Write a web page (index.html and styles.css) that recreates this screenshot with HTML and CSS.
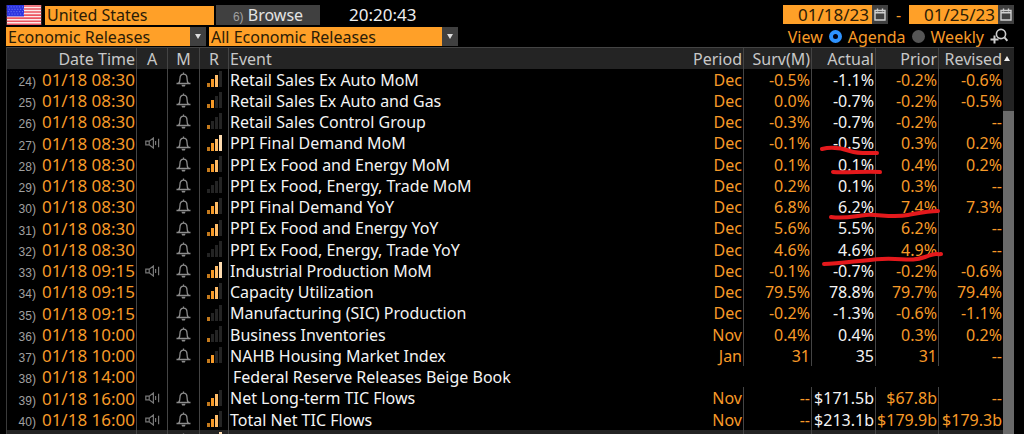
FILE: index.html
```
<!DOCTYPE html>
<html lang="en">
<head>
  <meta charset="UTF-8" />
  <meta name="viewport" content="width=device-width, initial-scale=1" />
  <title>Economic Releases</title>
  <link rel="stylesheet" href="styles.css">
</head>
<body>

  <!-- Shared icons -->
  <svg class="sprite" aria-hidden="true">
    <symbol id="bell" viewBox="0 0 15 15">
      <path d="M.5 11.5h14M2.6 11.2C3.8 10 4 9 4 6.2 4 3.8 5.4 2.2 7.5 2.2S11 3.8 11 6.2c0 2.8.2 3.8 1.4 5M7.5 2V.4" fill="none" stroke="#8c8c8c" stroke-width="1.3" />
      <path d="M5.4 12.8h4.2L8.8 14.6H6.2z" fill="#8c8c8c" />
    </symbol>
    <symbol id="sound" viewBox="0 0 15 12">
      <path d="M.8 4.2h3.4L8.4 1v10L4.2 7.8H.8zM4.2 4.2v3.6M10.6 4v4M13.6 1.8v8.4" fill="none" stroke="#777" stroke-width="1.2" />
    </symbol>
    <symbol id="bars" viewBox="0 0 15 17">
      <rect x="0" y="12" width="3" height="4" style="fill: var(--b1)" />
      <rect x="4" y="8" width="3" height="8" style="fill: var(--b2)" />
      <rect x="8" y="4" width="3" height="12" style="fill: var(--b3)" />
      <rect x="12" y="0" width="3" height="16" style="fill: var(--b4)" />
    </symbol>
    <symbol id="calendar" viewBox="0 0 12 13">
      <path d="M1 2.5h10v9.5H1z" fill="none" stroke="#d0d0d0" stroke-width="1.4" />
      <path d="M1 4.8h10M3.5.5v3M8.5.5v3" stroke="#d0d0d0" stroke-width="1.4" />
    </symbol>
  </svg>

  <main class="screen">
    <header class="toolbar">
      <div class="line">
        <svg class="flag" viewBox="0 0 36 21" role="img" aria-label="United States flag">
          <rect width="36" height="21" fill="#fbe9e9" />
          <path d="M0 1h36M0 4.2h36M0 7.4h36M0 10.6h36M0 13.8h36M0 17h36M0 20.2h36" stroke="#ec5560" stroke-width="1.7" />
          <rect width="18" height="12" fill="#2c35e0" />
          <path d="M1 2h17M2 4.5h16M1 7h17M2 9.5h16" stroke="#8189ff" stroke-width="1" stroke-dasharray="1 2" />
        </svg>
        <input class="country" type="text" value="United States" aria-label="Country">
        <button class="browse" type="button"><span class="key">6)</span> Browse</button>
        <time class="clock">20:20:43</time>
        <div class="dates">
          <input type="text" value="01/18/23" aria-label="From date">
          <button type="button" aria-label="Pick start date"><svg><use href="#calendar" /></svg></button>
          <span class="dash">-</span>
          <input type="text" value="01/25/23" aria-label="To date">
          <button type="button" aria-label="Pick end date"><svg><use href="#calendar" /></svg></button>
        </div>
      </div>

      <div class="line">
        <div class="drop category">
          <select aria-label="Category"><option>Economic Releases</option></select>
        </div>
        <div class="drop filter">
          <select aria-label="Filter"><option>All Economic Releases</option></select>
        </div>
        <div class="view">
          <span>View</span>
          <label><input type="radio" name="view" checked> Agenda</label>
          <label><input type="radio" name="view"> Weekly</label>
          <button type="button" aria-label="Add search">
            <svg viewBox="0 0 18 17">
              <circle cx="11" cy="6" r="4.6" fill="none" stroke="#ccc" stroke-width="1.6" />
              <path d="M14.4 9.4l3 3.4M.5 11.5h8M4.5 7.5v8" fill="none" stroke="#ccc" stroke-width="2" />
            </svg>
          </button>
        </div>
      </div>
    </header>

    <section class="grid">
      <table>
        <colgroup>
          <col class="c-date"><col class="c-a"><col class="c-m"><col class="c-r"><col>
          <col class="c-period"><col class="c-surv"><col class="c-actual"><col class="c-prior"><col class="c-revised">
        </colgroup>
        <thead>
          <tr><th>Date Time</th><th>A</th><th>M</th><th>R</th><th>Event</th><th>Period</th><th>Surv(M)</th><th>Actual</th><th>Prior</th><th>Revised</th></tr>
        </thead>
        <tbody>
          <tr><td><span class="key">24)</span>01/18 08:30</td><td></td><td><svg class="bell"><use href="#bell" /></svg></td><td><svg class="bars r3"><use href="#bars" /></svg></td><td>Retail Sales Ex Auto MoM</td><td>Dec</td><td>-0.5%</td><td>-1.1%</td><td>-0.2%</td><td>-0.6%</td></tr>
          <tr><td><span class="key">25)</span>01/18 08:30</td><td></td><td><svg class="bell"><use href="#bell" /></svg></td><td><svg class="bars r2"><use href="#bars" /></svg></td><td>Retail Sales Ex Auto and Gas</td><td>Dec</td><td>0.0%</td><td>-0.7%</td><td>-0.2%</td><td>-0.5%</td></tr>
          <tr><td><span class="key">26)</span>01/18 08:30</td><td></td><td><svg class="bell"><use href="#bell" /></svg></td><td><svg class="bars r1"><use href="#bars" /></svg></td><td>Retail Sales Control Group</td><td>Dec</td><td>-0.3%</td><td>-0.7%</td><td>-0.2%</td><td>--</td></tr>
          <tr><td><span class="key">27)</span>01/18 08:30</td><td><svg class="sound"><use href="#sound" /></svg></td><td><svg class="bell"><use href="#bell" /></svg></td><td><svg class="bars r4"><use href="#bars" /></svg></td><td>PPI Final Demand MoM</td><td>Dec</td><td>-0.1%</td><td>-0.5%</td><td>0.3%</td><td>0.2%</td></tr>
          <tr><td><span class="key">28)</span>01/18 08:30</td><td></td><td><svg class="bell"><use href="#bell" /></svg></td><td><svg class="bars r3"><use href="#bars" /></svg></td><td>PPI Ex Food and Energy MoM</td><td>Dec</td><td>0.1%</td><td>0.1%</td><td>0.4%</td><td>0.2%</td></tr>
          <tr><td><span class="key">29)</span>01/18 08:30</td><td></td><td><svg class="bell"><use href="#bell" /></svg></td><td><svg class="bars"><use href="#bars" /></svg></td><td>PPI Ex Food, Energy, Trade MoM</td><td>Dec</td><td>0.2%</td><td>0.1%</td><td>0.3%</td><td>--</td></tr>
          <tr><td><span class="key">30)</span>01/18 08:30</td><td></td><td><svg class="bell"><use href="#bell" /></svg></td><td><svg class="bars r3"><use href="#bars" /></svg></td><td>PPI Final Demand YoY</td><td>Dec</td><td>6.8%</td><td>6.2%</td><td>7.4%</td><td>7.3%</td></tr>
          <tr><td><span class="key">31)</span>01/18 08:30</td><td></td><td><svg class="bell"><use href="#bell" /></svg></td><td><svg class="bars r3"><use href="#bars" /></svg></td><td>PPI Ex Food and Energy YoY</td><td>Dec</td><td>5.6%</td><td>5.5%</td><td>6.2%</td><td>--</td></tr>
          <tr><td><span class="key">32)</span>01/18 08:30</td><td></td><td><svg class="bell"><use href="#bell" /></svg></td><td><svg class="bars"><use href="#bars" /></svg></td><td>PPI Ex Food, Energy, Trade YoY</td><td>Dec</td><td>4.6%</td><td>4.6%</td><td>4.9%</td><td>--</td></tr>
          <tr><td><span class="key">33)</span>01/18 09:15</td><td><svg class="sound"><use href="#sound" /></svg></td><td><svg class="bell"><use href="#bell" /></svg></td><td><svg class="bars r4"><use href="#bars" /></svg></td><td>Industrial Production MoM</td><td>Dec</td><td>-0.1%</td><td>-0.7%</td><td>-0.2%</td><td>-0.6%</td></tr>
          <tr><td><span class="key">34)</span>01/18 09:15</td><td></td><td><svg class="bell"><use href="#bell" /></svg></td><td><svg class="bars r3"><use href="#bars" /></svg></td><td>Capacity Utilization</td><td>Dec</td><td>79.5%</td><td>78.8%</td><td>79.7%</td><td>79.4%</td></tr>
          <tr><td><span class="key">35)</span>01/18 09:15</td><td></td><td><svg class="bell"><use href="#bell" /></svg></td><td><svg class="bars r1"><use href="#bars" /></svg></td><td>Manufacturing (SIC) Production</td><td>Dec</td><td>-0.2%</td><td>-1.3%</td><td>-0.6%</td><td>-1.1%</td></tr>
          <tr><td><span class="key">36)</span>01/18 10:00</td><td></td><td><svg class="bell"><use href="#bell" /></svg></td><td><svg class="bars r1"><use href="#bars" /></svg></td><td>Business Inventories</td><td>Nov</td><td>0.4%</td><td>0.4%</td><td>0.3%</td><td>0.2%</td></tr>
          <tr><td><span class="key">37)</span>01/18 10:00</td><td></td><td><svg class="bell"><use href="#bell" /></svg></td><td><svg class="bars r2"><use href="#bars" /></svg></td><td>NAHB Housing Market Index</td><td>Jan</td><td>31</td><td>35</td><td>31</td><td>--</td></tr>
          <tr><td><span class="key">38)</span>01/18 14:00</td><td></td><td></td><td></td><td class="note" colspan="6">Federal Reserve Releases Beige Book</td></tr>
          <tr><td><span class="key">39)</span>01/18 16:00</td><td><svg class="sound"><use href="#sound" /></svg></td><td><svg class="bell"><use href="#bell" /></svg></td><td><svg class="bars r3"><use href="#bars" /></svg></td><td>Net Long-term TIC Flows</td><td>Nov</td><td>--</td><td>$171.5b</td><td>$67.8b</td><td>--</td></tr>
          <tr><td><span class="key">40)</span>01/18 16:00</td><td><svg class="sound"><use href="#sound" /></svg></td><td><svg class="bell"><use href="#bell" /></svg></td><td><svg class="bars r3"><use href="#bars" /></svg></td><td>Total Net TIC Flows</td><td>Nov</td><td>--</td><td>$213.1b</td><td>$179.9b</td><td>$179.3b</td></tr>
          <tr class="next"><td></td><td></td><td><svg class="bell"><use href="#bell" /></svg></td><td><svg class="bars r4"><use href="#bars" /></svg></td><td></td><td></td><td></td><td></td><td></td><td></td></tr>
        </tbody>
      </table>

      <div class="scroll" aria-hidden="true">
        <div class="up"></div>
        <div class="thumb"></div>
      </div>

      <!-- Red pen marks under the PPI figures -->
      <svg class="marks" viewBox="0 0 130 130" aria-hidden="true">
        <path d="M6 14C14 12 25 13 34 16S52 18 61 18M17 37C30 38 50 36 64 37M15 82C30 84 38 81 50 80S76 83 92 80 112 76 122 76M8 129C25 129 45 125 66 124S95 127 109 122 118 120 125 119" />
      </svg>
    </section>
  </main>

</body>
</html>
```

FILE: styles.css
```
* {
  box-sizing: border-box;
}

body {
  margin: 0;
  height: 100vh;
  overflow: hidden;
  background: #000;
  color: #f79a28;
  font-family: "Noto Sans", "Open Sans", sans-serif;
  font-size: 16px;
  line-height: 20px;
}

input, select, button {
  font: inherit;
  border: 0;
  border-radius: 0;
  margin: 0;
  padding: 0;
  outline: 0;
}

.sprite {
  display: none;
}

.screen {
  display: flex;
  flex-direction: column;
  height: 100%;
  padding: 5px 10px 0 6px;
}

/* ---------- Toolbar ---------- */
.toolbar {
  display: flex;
  flex-direction: column;
  gap: 2px;
  padding-bottom: 1px;
}

.line {
  display: flex;
  align-items: center;
  height: 20px;
}
.line + .line {
  height: 19px;
}

.flag {
  width: 36px;
  height: 20px;
  margin-right: 3px;
}

.country, .dates input, .drop select {
  height: 19px;
  background: #ffa028;
  color: #2b1c06;
}

.country {
  width: 169px;
  padding-left: 2px;
}

.browse {
  width: 104px;
  height: 20px;
  margin-left: 2px;
  background: #404040;
  color: #e4e4e4;
}

.key {
  font-family: "Liberation Sans Narrow", "Liberation Sans", sans-serif;
  font-size: 12px;
  color: #a0a0a0;
}

.clock {
  margin-left: 29px;
  font-size: 17px;
  color: #eee;
}

.dates {
  display: flex;
  margin-left: auto;
}
.dates input {
  width: 89px;
  padding-right: 3px;
  text-align: right;
  font-size: 17px;
}
.dates button {
  width: 16px;
  height: 19px;
  background: #404040;
}
.dates svg {
  display: block;
  width: 12px;
  height: 13px;
  margin: 0 auto;
}
.dash {
  width: 21px;
  text-align: center;
}

.drop {
  position: relative;
  width: 200px;
  padding-right: 16px;
  background: #404040;
}
.drop select {
  display: block;
  width: 100%;
  padding-left: 2px;
  appearance: none;
}
.drop::after {
  content: "";
  position: absolute;
  top: 7px;
  right: 5px;
  border: 3px solid transparent;
  border-top: 5px solid #ddd;
  border-bottom: 0;
}
.filter {
  width: 249px;
  margin-left: 3px;
}

.view {
  display: flex;
  align-items: center;
  gap: 6px;
  margin-left: auto;
  padding-right: 6px;
}
.view label {
  display: flex;
  align-items: center;
  gap: 6px;
}
.view input {
  appearance: none;
  width: 13px;
  height: 13px;
  border-radius: 50%;
  background: #555;
}
.view input:checked {
  border: 4px solid #2e93ff;
  background: #001;
}
.view button {
  background: none;
}
.view button svg {
  display: block;
  width: 18px;
  height: 17px;
}

/* ---------- Release table ---------- */
.grid {
  position: relative;
  flex: 1;
  min-height: 0;
  display: flex;
  align-items: flex-start;
  border-top: 1px solid #444;
  border-left: 1px solid #3a3a3a;
}

table {
  flex: 1;
  width: 100%;
  table-layout: fixed;
  border-collapse: separate;
  border-spacing: 0;
}

.c-date { width: 130px; }
.c-a { width: 31px; }
.c-m { width: 32px; }
.c-r { width: 29px; }
.c-period { width: 60px; }
.c-surv { width: 68px; }
.c-actual { width: 64px; }
.c-prior { width: 63px; }
.c-revised { width: 64px; }

th, td {
  height: 21px;
  padding: 0 1px;
  border-right: 1px solid #444;
  text-align: right;
  font-weight: normal;
  line-height: 20px;
  white-space: nowrap;
}
/* one spare pixel every fourth row */
tbody tr:nth-child(4n) td {
  height: 22px;
}

th {
  background: #242424;
  color: #c8c8c8;
}

td:first-child {
  font-size: 17px;
  line-height: 21px;
}
td .key {
  margin-right: 6px;
  line-height: 12px;
}

th:nth-child(2), th:nth-child(3), th:nth-child(4),
td:nth-child(2), td:nth-child(3), td:nth-child(4) {
  text-align: center;
}

th:nth-child(5), td:nth-child(5) {
  border-right: 0;
  text-align: left;
}
td:nth-child(5), td:nth-child(8) {
  color: #f4f4f4;
}
th:last-child, td:last-child {
  border-right: 0;
}
td.note {
  padding-left: 4px;
}

.next td {
  background: #242424;
}

td svg {
  display: block;
  margin: 0 auto;
}
.bell {
  width: 15px;
  height: 15px;
}
.sound {
  width: 15px;
  height: 12px;
}
.bars {
  --b1: #242424;
  --b2: #242424;
  --b3: #242424;
  --b4: #242424;
  width: 15px;
  height: 17px;
}
.r1, .r2, .r3, .r4 { --b1: #c47a1c; }
.r2, .r3, .r4 { --b2: #f79a28; }
.r3, .r4 { --b3: #ffbc68; }
.r4 { --b4: #ffdcb0; }

/* ---------- Scroll bar ---------- */
.scroll {
  display: flex;
  flex-direction: column;
  align-self: stretch;
  width: 11px;
  background: #242424;
}
.up {
  height: 63px;
}
.up::before {
  content: "";
  display: block;
  width: 0;
  margin: 8px 0 0 1px;
  border: 3px solid transparent;
  border-bottom: 5px solid #eee;
  border-top: 0;
}
.thumb {
  flex: 1;
  background: #6a6a6a;
}

.marks {
  position: absolute;
  top: 87px;
  right: 68px;
  width: 130px;
  height: 130px;
  overflow: visible;
  pointer-events: none;
}
.marks path {
  fill: none;
  stroke: #e4191c;
  stroke-width: 4;
  stroke-linecap: round;
}
```
